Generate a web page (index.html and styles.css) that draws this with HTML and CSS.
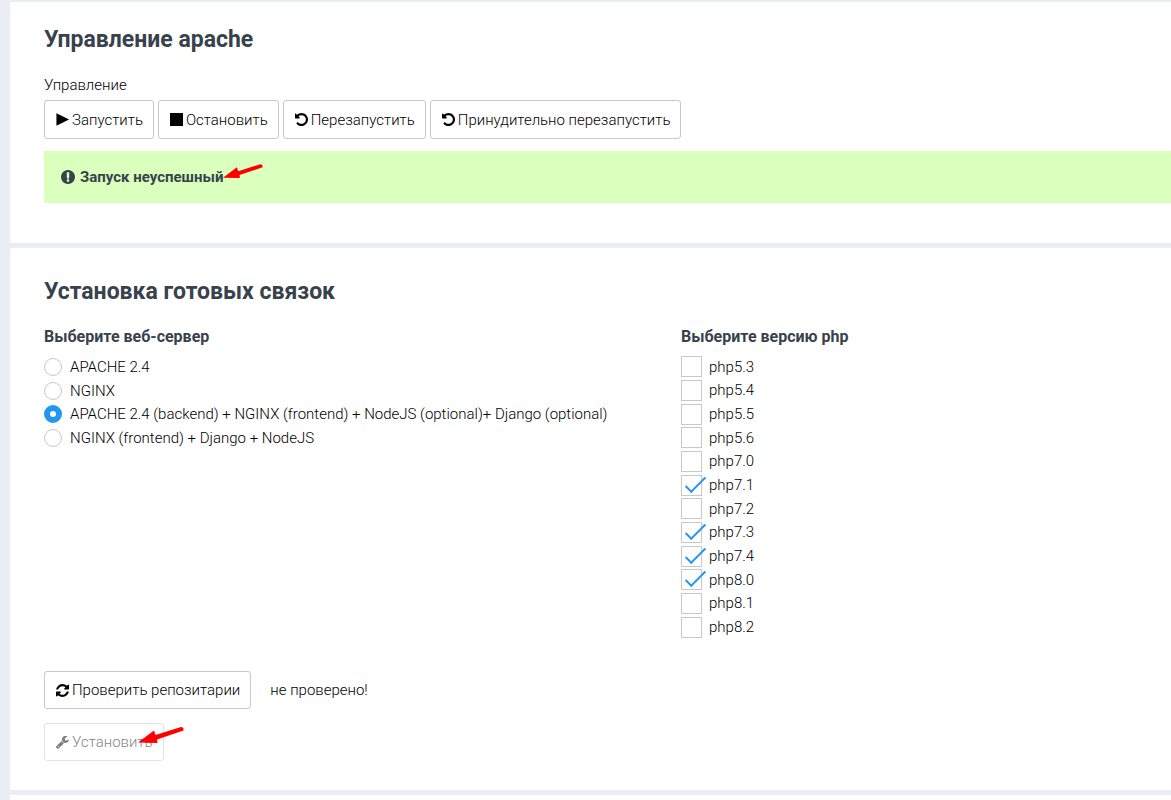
FILE: index.html
```html
<!DOCTYPE html>
<html lang="ru">
<head>
  <meta charset="UTF-8" />
  <meta name="viewport" content="width=device-width, initial-scale=1.0"/>
  <title>Управление apache</title>
  <link rel="stylesheet" href="styles.css">
</head>
<body>
  <!-- icons -->
  <svg class="sprite" aria-hidden="true">
    <symbol id="icon-play" viewBox="0 0 14 14"><path d="M0.5 0.2v13.600L14 7z"/></symbol>
    <symbol id="icon-stop" viewBox="0 0 14 14"><path d="M0 0h14v14h-14z"/></symbol>
    <symbol id="icon-undo" viewBox="128 128 1536 1536"><path d="M1664 896q0 156-61 298t-164 245-245 164-298 61q-172 0-327-72.500t-264-204.500q-7-10-6.500-22.500t8.500-20.500l137-138q10-9 25-9 16 2 23 12 73 95 179 147t225 52q104 0 198.500-40.500t163.500-109.500 109.500-163.500 40.500-198.500-40.500-198.500-109.500-163.500-163.500-109.500-198.500-40.500q-98 0-188 35.500t-160 101.500l137 138q31 30 14 69-17 40-59 40h-448q-26 0-45-19t-19-45v-448q0-42 40-59 39-17 69 14l130 129q107-101 244.500-156.500t284.500-55.500q156 0 298 61t245 164 164 245 61 298z"/></symbol>
    <symbol id="icon-refresh" viewBox="128 128 1536 1536"><path d="M1639 1056q0 5-1 7-64 268-268 434.500t-478 166.500q-146 0-282.500-55t-243.500-157l-129 129q-19 19-45 19t-45-19-19-45v-448q0-26 19-45t45-19h448q26 0 45 19t19 45-19 45l-137 137q71 66 161 102t187 36q134 0 250-65t186-179q11-17 53-117 8-23 30-23h192q13 0 22.500 9.500t9.500 22.500zm25-800v448q0 26-19 45t-45 19h-448q-26 0-45-19t-19-45 19-45l138-138q-148-137-349-137-134 0-250 65t-186 179q-11 17-53 117-8 23-30 23h-199q-13 0-22.500-9.500t-9.500-22.500v-7q65-268 270-434.500t480-166.500q146 0 284 55.500t245 156.500l130-129q19-19 45-19t45 19 19 45z"/></symbol>
    <symbol id="icon-alert" viewBox="128 128 1536 1536"><path d="M896 128q209 0 385.500 103t279.500 279.500 103 385.500-103 385.500-279.500 279.500-385.500 103-385.500-103-279.500-279.500-103-385.500 103-385.500 279.500-279.500 385.500-103zm128 1247v-190q0-14-9-23.500t-22-9.500h-192q-13 0-23 10t-10 23v190q0 13 10 23t23 10h192q13 0 22-9.500t9-23.500zm-2-344l18-621q0-12-10-18-10-8-24-8h-220q-14 0-24 8-10 6-10 18l17 621q0 10 10 17.500t24 7.500h185q14 0 23.500-7.500t10.500-17.500z"/></symbol>
    <symbol id="icon-wrench" viewBox="80 140 1660 1660"><path d="M448 1472q0-26-19-45t-45-19-45 19-19 45 19 45 45 19 45-19 19-45zm644-420l-682 682q-37 37-90 37-52 0-91-37l-106-108q-38-36-38-90 0-53 38-91l681-681q39 98 114.500 173.500t173.500 114.500zm634-435q0 39-23 106-47 134-164.500 217.500t-258.500 83.500q-185 0-316.500-131.500t-131.500-316.500 131.500-316.500 316.500-131.500q58 0 121.500 16.500t107.500 46.500q16 11 16 28t-16 28l-293 169v224l193 107q5-3 79-48.500t135.500-81 70.500-35.500q15 0 23.500 10t8.500 25z"/></symbol>
    <symbol id="icon-arrow" viewBox="0 0 46 20"><path d="M0 16.500L16 4.500l1.500 4.500L43 1q3 0 2.500 3.500L19 13.500l0.500 3.500z"/></symbol>
  </svg>

  <main class="page">
    <section class="panel">
      <h2>Управление apache</h2>
      <p class="caption">Управление</p>
      <div class="buttons">
        <button type="button" class="btn"><svg class="icon"><use href="#icon-play"/></svg>Запустить</button>
        <button type="button" class="btn"><svg class="icon"><use href="#icon-stop"/></svg>Остановить</button>
        <button type="button" class="btn"><svg class="icon"><use href="#icon-undo"/></svg>Перезапустить</button>
        <button type="button" class="btn"><svg class="icon"><use href="#icon-undo"/></svg>Принудительно перезапустить</button>
      </div>
      <div class="alert" role="alert">
        <svg class="icon icon-large"><use href="#icon-alert"/></svg>
        <span class="marked">Запуск неуспешный<svg class="arrow arrow-small"><use href="#icon-arrow"/></svg></span>
      </div>
    </section>

    <section class="panel">
      <h2>Установка готовых связок</h2>
      <form>
        <div class="columns">
          <div>
            <h3 id="serverTitle">Выберите веб-сервер</h3>
            <div class="options servers" role="radiogroup" aria-labelledby="serverTitle">
              <label><input type="radio" name="server">APACHE 2.4</label>
              <label><input type="radio" name="server">NGINX</label>
              <label><input type="radio" name="server" checked>APACHE 2.4 (backend) + NGINX (frontend) + NodeJS (optional)+ Django (optional)</label>
              <label><input type="radio" name="server">NGINX (frontend) + Django + NodeJS</label>
            </div>
          </div>
          <div>
            <h3 id="phpTitle">Выберите версию php</h3>
            <div class="options versions" role="group" aria-labelledby="phpTitle">
              <label><input type="checkbox">php5.3</label>
              <label><input type="checkbox">php5.4</label>
              <label><input type="checkbox">php5.5</label>
              <label><input type="checkbox">php5.6</label>
              <label><input type="checkbox">php7.0</label>
              <label><input type="checkbox" checked>php7.1</label>
              <label><input type="checkbox">php7.2</label>
              <label><input type="checkbox" checked>php7.3</label>
              <label><input type="checkbox" checked>php7.4</label>
              <label><input type="checkbox" checked>php8.0</label>
              <label><input type="checkbox">php8.1</label>
              <label><input type="checkbox">php8.2</label>
            </div>
          </div>
        </div>

        <div class="check-row">
          <button type="button" class="btn"><svg class="icon"><use href="#icon-refresh"/></svg>Проверить репозитарии</button>
          <span>не проверено!</span>
        </div>
        <div class="marked install">
          <button type="submit" class="btn" disabled><svg class="icon"><use href="#icon-wrench"/></svg>Установить</button>
          <svg class="arrow arrow-big"><use href="#icon-arrow"/></svg>
        </div>
      </form>
    </section>

    <section class="panel"></section>
  </main>
</body>
</html>
```

FILE: styles.css
```css
* {
  box-sizing: border-box;
}

body {
  margin: 0;
  font-family: Roboto, "Open Sans", sans-serif;
  font-size: 15px;
  font-weight: 300;
  line-height: 20px;
  color: #000;
  background: #e9edf6;
}

.sprite {
  display: none;
}

.page {
  display: flex;
  flex-direction: column;
  gap: 5px;
  height: 100vh;
  padding: 2px 0 0 10px;
  overflow: hidden;
}

.panel {
  flex-shrink: 0;
  padding: 23px 0 29px 34px;
  background: #fff;
}

.panel:first-child {
  padding-bottom: 40px;
}

.panel + .panel {
  padding-top: 29px;
}

h2 {
  margin: 0 0 20px;
  font-size: 23px;
  font-weight: 700;
  line-height: 30px;
  color: #37424c;
}

h3 {
  margin: 0 0 8px;
  font-size: 16px;
  font-weight: 700;
  line-height: 20px;
  color: #37424c;
}

.caption {
  margin: 0 0 5px;
}

.buttons {
  display: flex;
  gap: 4px;
}

.buttons .btn {
  height: 39px;
}

.btn {
  display: inline-flex;
  align-items: center;
  gap: 3px;
  height: 38px;
  padding: 0 10px 0 11px;
  font: inherit;
  color: #000;
  background: #fff;
  border: 1px solid #c8c8c8;
  border-radius: 3px;
  cursor: pointer;
}

.btn:disabled {
  opacity: 0.5;
  cursor: default;
}

.icon {
  flex: none;
  width: 13px;
  height: 13px;
  fill: currentColor;
}

.icon-large {
  width: 14px;
  height: 14px;
}

.alert {
  display: flex;
  align-items: center;
  gap: 5px;
  margin-top: 12px;
  padding: 16px 17px;
  font-weight: 700;
  color: #37424c;
  background: #dbffbd;
}

/* red pointers over the content */
.marked {
  position: relative;
}

.arrow {
  position: absolute;
  fill: #f00;
}

.arrow-small {
  left: 100%;
  top: -4px;
  width: 40px;
  height: 18px;
}

.arrow-big {
  left: 94px;
  top: 3px;
  width: 46px;
  height: 20px;
}

.columns {
  display: grid;
  grid-template-columns: 13fr 10fr;
}

.options {
  display: grid;
  grid-auto-rows: 1fr;
}

.servers {
  min-height: 95px;
}

.versions {
  min-height: 284px;
}

.options label {
  display: flex;
  align-items: center;
  justify-self: start;
  gap: 8px;
}

.versions label {
  gap: 7px;
}

.options input {
  position: relative;
  flex: none;
  appearance: none;
  margin: 0;
  background: #fff;
  border: 1px solid #c8c8c8;
}

input[type="radio"] {
  width: 18px;
  height: 18px;
  border-radius: 50%;
}

input[type="radio"]:checked {
  border: 6px solid #2196f3;
}

input[type="checkbox"] {
  width: 21px;
  height: 21px;
}

input[type="checkbox"]:checked::after {
  content: "";
  position: absolute;
  left: 9px;
  top: -4px;
  width: 7px;
  height: 19px;
  border: solid #2196f3;
  border-width: 0 2px 2px 0;
  transform: rotate(45deg);
}

.check-row {
  display: flex;
  align-items: center;
  gap: 19px;
  margin: 32px 0 14px;
}

.install {
  display: flex;
}
```
